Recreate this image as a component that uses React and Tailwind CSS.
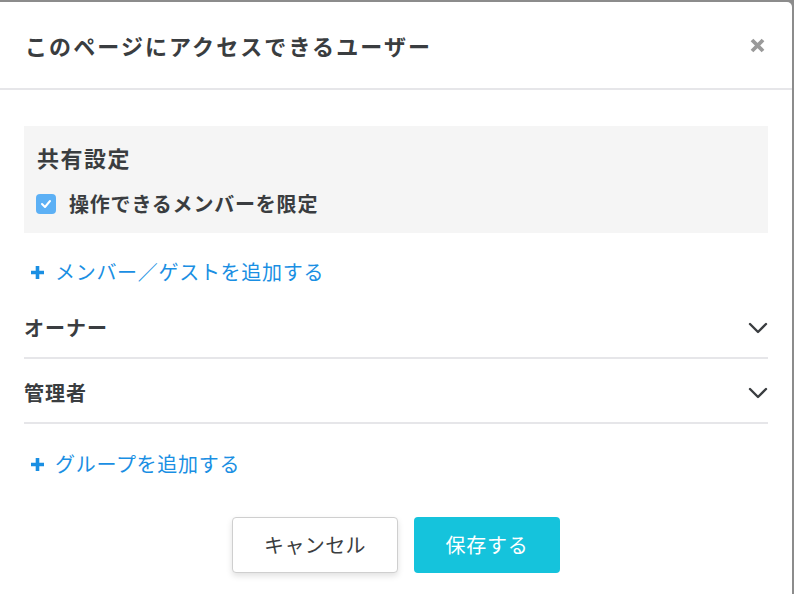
import React from 'react';

const font = { fontFamily: '"Noto Sans CJK JP", "Noto Sans", sans-serif' };

const Chevron = () => (
  <svg width="20" height="12" viewBox="0 0 20 12" fill="none">
    <path d="M2 2 L10 10 L18 2" stroke="#3a3d40" strokeWidth="2.4" strokeLinecap="round" strokeLinejoin="round" />
  </svg>
);

const Plus = () => (
  <svg width="15" height="15" viewBox="0 0 15 15">
    <path d="M7.5 1 V14 M1 7.5 H14" stroke="#1a8fe3" strokeWidth="3.6" />
  </svg>
);

const Section = ({ label }) => (
  <div className="flex items-center justify-between pt-[21px] pb-[16px] border-b-2 border-[#e6e6e9]">
    <span className="text-[20px] leading-[26px] font-bold tracking-[0.05em] text-[#3a3d40]">{label}</span>
    <Chevron />
  </div>
);

const AddLink = ({ label, className = '' }) => (
  <div className={`flex items-center gap-[10px] pl-[6px] ${className}`}>
    <Plus />
    <span className="text-[20px] leading-[26px] tracking-[0.035em] text-[#1a8fe3]">{label}</span>
  </div>
);

export default function App() {
  return (
    <div className="h-[594px] bg-[#8c8c8c] pt-[2px] pr-[2px] overflow-hidden" style={font}>
      <div className="h-full bg-white rounded-tr-[5px]">
        <div className="h-[88px] flex items-center justify-between pl-[25px] pr-[27px] border-b-2 border-[#e6e6e9]">
          <h1 className="text-[22px] font-bold tracking-[0.095em] text-[#3a3d40]">このページにアクセスできるユーザー</h1>
          <svg width="15" height="15" viewBox="0 0 15 15">
            <path d="M2 2 L13 13 M13 2 L2 13" stroke="#9a9a9a" strokeWidth="3.8" />
          </svg>
        </div>

        <div className="px-[24px] pt-[36px]">
          <div className="bg-[#f5f5f5] pl-[13px] pt-[18px] pb-[16px]">
            <div className="text-[22px] leading-[26px] font-bold tracking-[0.07em] text-[#3a3d40]">共有設定</div>
            <div className="flex items-center gap-[13px] mt-[21px] -ml-[1px]">
              <div className="w-[20px] h-[20px] rounded-[4px] bg-[#5cb0f5] flex items-center justify-center">
                <svg width="12" height="10" viewBox="0 0 12 10" fill="none">
                  <path d="M2 5 L5 8 L10 2" stroke="white" strokeWidth="2" strokeLinecap="round" strokeLinejoin="round" />
                </svg>
              </div>
              <span className="text-[20px] leading-[26px] font-bold tracking-[0.04em] text-[#3a3d40]">操作できるメンバーを限定</span>
            </div>
          </div>

          <AddLink label="メンバー／ゲストを追加する" className="mt-[26px] mb-[9px]" />

          <Section label="オーナー" />
          <Section label="管理者" />

          <AddLink label="グループを追加する" className="mt-[27px]" />

          <div className="flex justify-center gap-[16px] mt-[40px]">
            <button className="w-[166px] h-[56px] rounded-[4px] border border-[#cfcfcf] bg-white shadow-[0_3px_6px_rgba(0,0,0,0.12)] text-[20px] tracking-[0.02em] text-[#3a3d40]">
              キャンセル
            </button>
            <button className="w-[146px] h-[56px] rounded-[4px] bg-[#15c3dc] text-[20px] tracking-[0.04em] text-white">
              保存する
            </button>
          </div>
        </div>
      </div>
    </div>
  );
}
